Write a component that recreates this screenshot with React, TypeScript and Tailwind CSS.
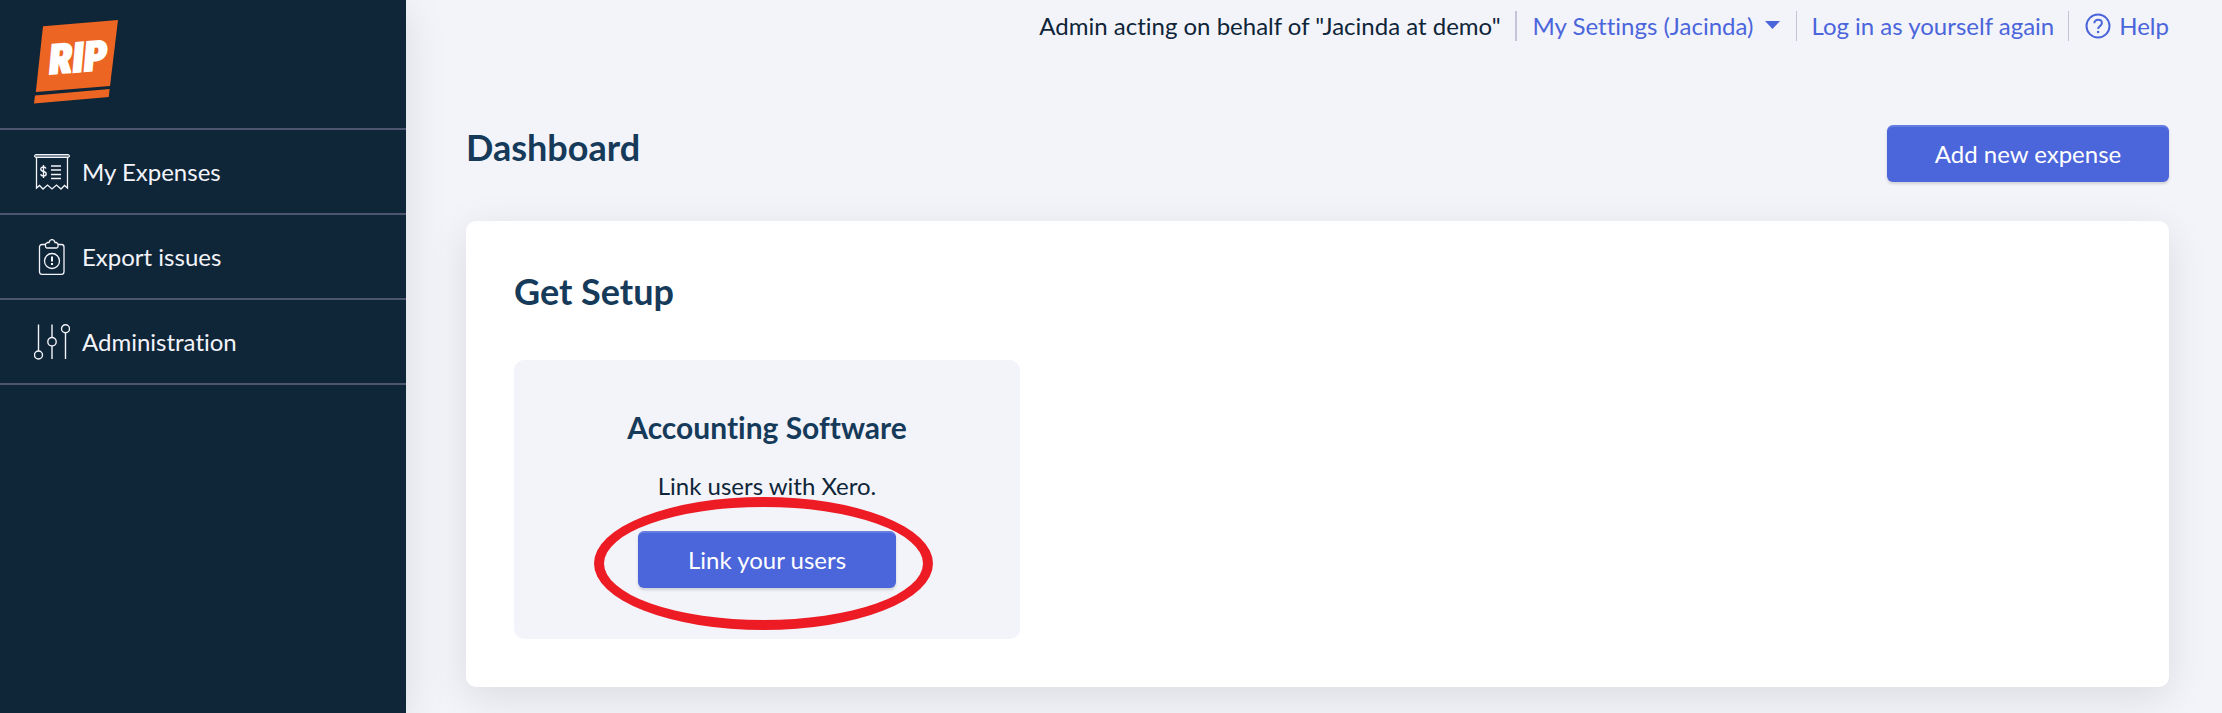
import React from 'react';

const Logo: React.FC = () => (
  <svg width="84" height="84" viewBox="0 0 84 84" role="img" aria-label="RIP">
    <path d="M9 6.3 84 0 76 66 1.8 72Z" fill="#ec6522" />
    <path d="M1 75.6 75.6 69 74.8 77 0 83.6Z" fill="#ec6522" />
    <text
      transform="matrix(1 -0.08 -0.09 1 14 54)"
      fontFamily="'Roboto Condensed', 'Liberation Sans Narrow', 'Liberation Sans', sans-serif"
      fontSize="41"
      fontWeight="900"
      fill="#fff"
      stroke="#fff"
      strokeWidth="2"
    >
      RIP
    </text>
  </svg>
);

const ReceiptIcon: React.FC = () => (
  <svg width="36" height="36" viewBox="0 0 36 36" fill="none" stroke="currentColor">
    <rect x="0.5" y="0.5" width="35" height="3" rx="1.5" fill="currentColor" fillOpacity="0.5" />
    <path d="M2.5 4v30l3-2.5 3.5 3.5 4.5-4 4.5 4 4.5-4 4.5 4 3.5-3.5 3 2.5V4" strokeWidth="1.3" />
    <path d="M17 12h10M17 16h10M17 20.500h10M17 24.500h10" strokeWidth="1.3" />
    <path d="M12 14.500c-.5-1.200-1.500-1.500-2.500-1.500-1.600 0-2.700.8-2.700 2.200 0 3.300 5.400 1.400 5.400 4.600 0 1.500-1.200 2.200-2.700 2.200-1.500 0-2.500-.6-2.900-1.800M9.500 11v13" strokeWidth="1.4" />
  </svg>
);

const ClipboardIcon: React.FC = () => (
  <svg width="36" height="36" viewBox="0 0 36 36" fill="none" stroke="currentColor" strokeWidth="1.3">
    <path d="M11.500 5.500H8a2.500 2.500 0 0 0-2.500 2.500v25A2.500 2.500 0 0 0 8 35.300h19.500A2.500 2.500 0 0 0 30 33V8a2.500 2.500 0 0 0-2.500-2.500H24" />
    <path d="M13.500 3.500h1.500c.5-2 1.500-2.900 3-2.900s2.500.9 3 2.900h1.500L24 5v2.500A1.500 1.500 0 0 1 22.500 9h-9.500a1.500 1.500 0 0 1-1.500-1.500V5Z" />
    <circle cx="18" cy="22" r="7.500" />
    <path d="M18 17.500v5M18 24v2" strokeWidth="2" />
  </svg>
);

const SlidersIcon: React.FC = () => (
  <svg width="36" height="36" viewBox="0 0 36 36" fill="none" stroke="currentColor" strokeWidth="1.4">
    <path d="M4.500 0.500V27M18 0.500V13.500M18 22v13M31.500 9v26" />
    <circle cx="4.500" cy="31" r="4" />
    <circle cx="18" cy="17.700" r="4.200" />
    <circle cx="31.500" cy="4.800" r="4" />
  </svg>
);

const navItems = [
  { label: 'My Expenses', icon: ReceiptIcon },
  { label: 'Export issues', icon: ClipboardIcon },
  { label: 'Administration', icon: SlidersIcon },
];

const Button: React.FC<{ className: string; children: React.ReactNode }> = ({ className, children }) => (
  <button
    type="button"
    className={`h-[57px] rounded-md bg-[#4b65db] text-2xl text-white shadow-[0_2px_3px_rgba(0,0,0,0.15),inset_0_3px_0_-1px_rgba(255,255,255,0.15)] ${className}`}
  >
    {children}
  </button>
);

const Sidebar: React.FC = () => (
  <aside className="w-[406px] shrink-0 bg-[#0f2538] text-[#f3f4fa] shadow-[0_10px_40px_rgba(0,0,0,0.1)]">
    <div className="px-[34px] pt-5 pb-6">
      <Logo />
    </div>
    <nav className="border-t-2 border-[#4f5470]">
      {navItems.map(({ label, icon: Icon }) => (
        <a
          key={label}
          href="#"
          className="flex h-[85px] items-center gap-3 border-b-2 border-[#4f5470] px-[34px] text-2xl leading-9"
        >
          <Icon />
          {label}
        </a>
      ))}
    </nav>
  </aside>
);

const TopBar: React.FC = () => (
  <div className="flex h-[30px] items-stretch justify-end text-2xl leading-[30px] text-[#4b65db]">
    <span className="pr-[14px] text-[#0f2538]">Admin acting on behalf of "Jacinda at demo"</span>
    <button type="button" className="flex items-center border-l-2 border-[#c3c4d6] px-4">
      My Settings (Jacinda)
      <svg className="ml-3" width="15" height="12" viewBox="0 0 15 12" fill="currentColor">
        <path d="M0 1h15L7.500 9Z" />
      </svg>
    </button>
    <a href="#" className="border-l border-[#c3c4d6] px-[14px]">
      Log in as yourself again
    </a>
    <a href="#" className="flex items-center gap-2 border-l border-[#c3c4d6] pl-4">
      <svg width="26" height="26" viewBox="0 0 26 26" fill="none" stroke="currentColor" strokeWidth="2">
        <circle cx="13" cy="13" r="11.500" />
        <path d="M9.300 10.300c0-2.200 1.600-3.600 3.800-3.600s3.800 1.400 3.800 3.400c0 3-3.800 3-3.800 5.900" />
        <circle cx="13.100" cy="19" r="1.300" fill="currentColor" stroke="none" />
      </svg>
      Help
    </a>
  </div>
);

const App: React.FC = () => {
  return (
    <div className="flex min-h-screen bg-[#f3f4fa] font-['Lato',sans-serif] text-[#0f2538] [font-variant-ligatures:none]">
      <Sidebar />
      <main className="min-w-0 flex-1 pt-[11px] pr-[53px] pb-[26px] pl-[60px]">
        <TopBar />

        <div className="mt-[84px] flex items-start justify-between">
          <h1 className="text-4xl leading-[44px] font-bold text-[#163a59]">Dashboard</h1>
          <Button className="w-[282px]">Add new expense</Button>
        </div>

        <section className="mt-[39px] rounded-[10px] bg-white p-12 shadow-[0_10px_40px_rgba(0,0,0,0.1)]">
          <h2 className="text-4xl leading-[44px] font-bold text-[#163a59]">Get Setup</h2>

          <div className="mt-[47px] w-[506px] rounded-[10px] bg-[#f3f4fa] pt-12 pb-[51px] text-center">
            <h3 className="text-3xl leading-[38px] font-bold text-[#163a59]">Accounting Software</h3>
            <p className="mt-[22px] mb-[27px] text-2xl leading-9">Link users with Xero.</p>
            <div className="relative inline-block">
              <Button className="w-[258px]">Link your users</Button>
              {/* Highlight ring around the action */}
              <div className="pointer-events-none absolute -top-[34px] -right-[37px] -bottom-[42px] -left-11 rounded-[50%] border-10 border-[#ed1c24]" />
            </div>
          </div>
        </section>
      </main>
    </div>
  );
};

export default App;
